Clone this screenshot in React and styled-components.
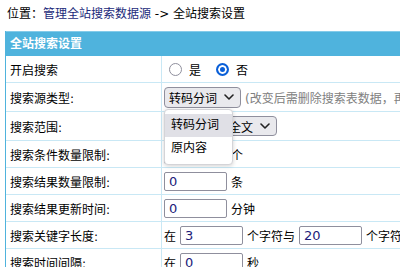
import React from "react";
import styled, { createGlobalStyle } from "styled-components";

const GlobalStyle = createGlobalStyle`
  body {
    margin: 0;
    background: #fff;
    overflow: hidden;
    font-family: "DejaVu Sans", "Noto Sans CJK SC", sans-serif;
    font-size: 12px;
    color: #000;
  }
`;

const Crumb = styled.div`
  height: 31px;
  box-sizing: border-box;
  padding: 6px 0 0 7px;
  line-height: 16px;
  white-space: nowrap;
  a {
    color: #1b2a7a;
    text-decoration: none;
  }
`;

const Table = styled.div`
  position: relative;
  margin-left: 5px;
  width: 640px;
  border-left: 1px solid #4fb3dd;
`;

const Head = styled.div`
  height: 25px;
  box-sizing: border-box;
  background: #4fb3dd;
  border-top: 1px solid #84cbe9;
  color: #fff;
  font-weight: bold;
  padding-left: 4px;
  line-height: 24px;
`;

const Row = styled.div`
  display: grid;
  grid-template-columns: 156px 1fr;
  height: ${(p) => p.$h}px;
  box-sizing: border-box;
  border-bottom: 1px solid #c9e8f5;
`;

const Label = styled.div`
  display: flex;
  align-items: center;
  padding-left: 4px;
  border-right: 1px solid #c9e8f5;
  white-space: nowrap;
`;

const Value = styled.div`
  display: flex;
  align-items: center;
  gap: 4px;
  padding-left: 2px;
  white-space: nowrap;
`;

const RadioGroup = styled.label`
  display: flex;
  align-items: center;
  margin-left: 5px;
  margin-right: ${(p) => p.$mr || 0}px;
`;

const Radio = styled.span`
  width: 13px;
  height: 13px;
  box-sizing: border-box;
  border-radius: 50%;
  margin-right: 7px;
  border: ${(p) => (p.$on ? "2px solid #0a5fd8" : "1.5px solid #8f8f9d")};
  background: ${(p) => (p.$on ? "#0a5fd8" : "#fff")};
  box-shadow: ${(p) => (p.$on ? "inset 0 0 0 2px #fff" : "none")};
`;

const Select = styled.div`
  display: flex;
  align-items: center;
  justify-content: space-between;
  width: ${(p) => p.$w}px;
  height: ${(p) => p.$hh}px;
  box-sizing: border-box;
  padding: 0 6px 0 4px;
  background: #e9e9ed;
  border: 1px solid #8f8f9d;
  border-radius: 4px;
  overflow: hidden;
  svg {
    flex: none;
  }
`;

const Note = styled.span`
  color: #808080;
`;

const Input = styled.div`
  width: 63px;
  height: 19px;
  box-sizing: border-box;
  border: 1px solid #8f8f9d;
  border-radius: 2px;
  padding-left: 4px;
  font-size: 13px;
  line-height: 17px;
  color: #1c1c7a;
  background: #fff;
`;

const Menu = styled.div`
  position: absolute;
  left: 158px;
  top: 78px;
  width: 69px;
  box-sizing: border-box;
  padding: 4px 0;
  background: #fff;
  border: 1px solid #d4d4d8;
  border-radius: 4px;
  box-shadow: 0 1px 4px rgba(0, 0, 0, 0.18);
`;

const Option = styled.div`
  height: 23px;
  line-height: 23px;
  padding-left: 6px;
  background: ${(p) => (p.$active ? "#e0e0e6" : "transparent")};
`;

const Chevron = () => (
  <svg width="10" height="6" viewBox="0 0 10 6">
    <path d="M1 1l4 4 4-4" fill="none" stroke="#222" strokeWidth="1.6" strokeLinecap="round" strokeLinejoin="round" />
  </svg>
);

export default function App() {
  return (
    <>
      <GlobalStyle />
      <Crumb>
        位置：<a href="#">管理全站搜索数据源</a> -&gt; 全站搜索设置
      </Crumb>
      <Table>
        <Head>全站搜索设置</Head>
        <Row $h={27}>
          <Label>开启搜索</Label>
          <Value>
            <RadioGroup $mr={6}>
              <Radio />是
            </RadioGroup>
            <RadioGroup>
              <Radio $on />否
            </RadioGroup>
          </Value>
        </Row>
        <Row $h={29}>
          <Label>搜索源类型:</Label>
          <Value>
            <Select $w={77} $hh={21}>
              转码分词 <Chevron />
            </Select>
            <Note>(改变后需删除搜索表数据，再重新生成索引)</Note>
          </Value>
        </Row>
        <Row $h={29}>
          <Label>搜索范围:</Label>
          <Value>
            <Select $w={113} $hh={20}>
              标题简介和全文 <Chevron />
            </Select>
          </Value>
        </Row>
        <Row $h={27}>
          <Label>搜索条件数量限制:</Label>
          <Value>
            <Input>0</Input>个
          </Value>
        </Row>
        <Row $h={27}>
          <Label>搜索结果数量限制:</Label>
          <Value>
            <Input>0</Input>条
          </Value>
        </Row>
        <Row $h={27}>
          <Label>搜索结果更新时间:</Label>
          <Value>
            <Input>0</Input>分钟
          </Value>
        </Row>
        <Row $h={27}>
          <Label>搜索关键字长度:</Label>
          <Value>
            在 <Input>3</Input>个字符与 <Input>20</Input>个字符之间
          </Value>
        </Row>
        <Row $h={27}>
          <Label>搜索时间间隔:</Label>
          <Value>
            在 <Input>0</Input>秒
          </Value>
        </Row>
        <Menu>
          <Option $active>转码分词</Option>
          <Option>原内容</Option>
        </Menu>
      </Table>
    </>
  );
}
